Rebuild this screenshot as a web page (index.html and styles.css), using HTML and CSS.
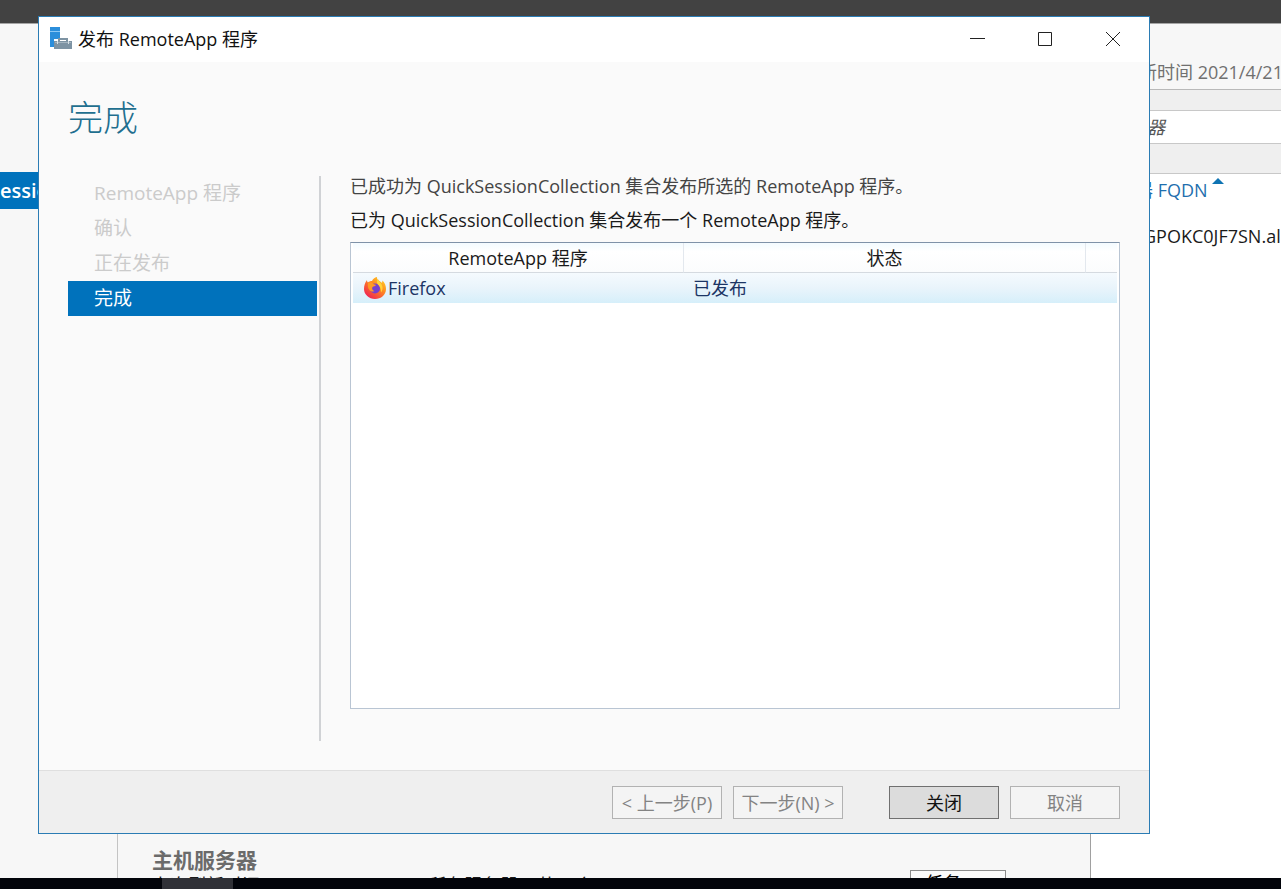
FILE: index.html
```html
<!DOCTYPE html>
<html lang="zh-CN">
<head>
  <meta charset="UTF-8" />
  <meta name="viewport" content="width=device-width, initial-scale=1.0" />
  <title>发布 RemoteApp 程序</title>
  <link rel="stylesheet" href="styles.css">
</head>
<body>
  <div class="topbar"></div>
  <div class="workspace">
    <div class="side">
      <a class="side-link" href="#">essionCollection</a>
    </div>
    <div class="hosts">
      <div class="hosts-text">
        <h2>主机服务器</h2>
        <div class="hosts-info"><span>上次刷新时间</span><span>所有服务器 | 共 1 个</span></div>
      </div>
      <button class="task-btn">任务</button>
    </div>
    <div class="servers">
      <div class="refresh-time">新时间 2021/4/21</div>
      <div class="filter-bar"><div class="filter-box">筛选器</div></div>
      <div class="server-head">服务器 FQDN <span class="sort"></span></div>
      <div class="server-name">WIN-GPOKC0JF7SN.alibaba</div>
    </div>
  </div>
  <div class="taskbar"><div class="taskbar-item"></div></div>

  <div class="dialog" role="dialog" aria-labelledby="dialog-title">
    <div class="titlebar">
      <svg class="app-icon" width="24" height="24" viewBox="0 0 24 24">
        <path fill="#2b8edb" d="M1 0h10v12H5v8H1z"/>
        <path stroke="#8cc8f5" d="M1 4.500h10"/>
        <path fill="none" stroke="#7d93a3" stroke-width="2" d="M10 14v-2h8v2"/>
        <path fill="#7d93a3" d="M5 14h18v8H5z"/>
        <path stroke="#a3b4c0" d="M6 15.500h16"/>
        <path fill="#d5dfe5" d="M8 14h1v3H8zM19 14h1v3h-1z"/>
      </svg>
      <span id="dialog-title">发布 RemoteApp 程序</span>
      <div class="window-btns">
        <button aria-label="最小化"><svg width="16" height="16" viewBox="0 0 16 16"><path d="M1 7.500h15"/></svg></button>
        <button aria-label="最大化"><svg width="16" height="16" viewBox="0 0 16 16"><path d="M1.500 1.500h13v13h-13z"/></svg></button>
        <button aria-label="关闭窗口"><svg width="16" height="16" viewBox="0 0 16 16"><path d="M1 1l14 14M15 1L1 15"/></svg></button>
      </div>
    </div>

    <h1>完成</h1>

    <div class="main">
      <ul class="steps">
        <li>RemoteApp 程序</li>
        <li>确认</li>
        <li>正在发布</li>
        <li class="active">完成</li>
      </ul>
      <div class="content">
        <p class="summary">已成功为 QuickSessionCollection 集合发布所选的 RemoteApp 程序。</p>
        <p>已为 QuickSessionCollection 集合发布一个 RemoteApp 程序。</p>
        <div class="list">
          <table>
            <colgroup><col class="col-app"><col class="col-state"><col class="col-rest"></colgroup>
            <thead>
              <tr><th>RemoteApp 程序</th><th>状态</th><th></th></tr>
            </thead>
            <tbody>
              <tr>
                <td>
                  <div class="app">
                    <svg width="22" height="22" viewBox="0 0 22 22">
                      <defs>
                        <linearGradient id="fox" x1="1" y1="0" x2="0.200" y2="1">
                          <stop offset="0" stop-color="#ffe226"/>
                          <stop offset="0.450" stop-color="#ff8a1f"/>
                          <stop offset="1" stop-color="#ef1d55"/>
                        </linearGradient>
                      </defs>
                      <path fill="url(#fox)" d="M3 3c0 1 .3 2 1 2.500C5 4.500 6.500 4 8 4c1-2 2.500-3.500 5-4-.3 2 1 3 2.500 4C17 5 17.500 5.500 18 6l.5-2.500C21 6 22 9 22 12c0 6-5 10-11 10S0 17.500 0 12c0-3.500 1-6.500 3-9z"/>
                      <circle cx="11" cy="11.500" r="5" fill="#7540cf"/>
                      <path fill="#ff9b24" d="M4 6c2-1.500 4-1 5.500 1 1 .8 2 .5 2.500 1-.5 1.500-2.500 1.200-3.500 2-1 1.500 0 3.500 2 4-2 1-4 .5-5-1C4 11.500 3.500 9 4 6z"/>
                      <path fill="#ffd43a" d="M14 2c1 3 4 4 4.500 8 .3 2-.3 4-1.500 5.500 0-4-1-6-3-8C12.500 6 12.500 4 14 2z"/>
                    </svg>
                    <span>Firefox</span>
                  </div>
                </td>
                <td>已发布</td>
                <td></td>
              </tr>
            </tbody>
          </table>
        </div>
      </div>
    </div>

    <div class="footer">
      <button disabled>&lt; 上一步(P)</button>
      <button disabled>下一步(N) &gt;</button>
      <button class="close-btn">关闭</button>
      <button disabled>取消</button>
    </div>
  </div>
</body>
</html>
```

FILE: styles.css
```css
* {
  box-sizing: border-box;
}
body {
  margin: 0;
  height: 100vh;
  display: flex;
  flex-direction: column;
  overflow: hidden;
  font-family: "Open Sans", "Noto Sans CJK SC", sans-serif;
  font-size: 18px;
  line-height: 24px;
  color: #1a1a1a;
  background: #f7f7f7;
}
h1, h2, p, ul {
  margin: 0;
  padding: 0;
}
button {
  font: inherit;
}

/* server manager behind the dialog */
.topbar {
  flex: none;
  height: 24px;
  background: #424242;
  border-bottom: 1px solid #a5a5a5;
}
.workspace {
  flex: 1;
  min-height: 0;
  display: grid;
  grid-template-columns: 117px 1fr 190px;
  grid-template-rows: 100%;
}
.side {
  padding-top: 148px;
  overflow: hidden;
}
.side-link {
  display: block;
  padding: 6px 0;
  font-size: 20px;
  font-weight: 600;
  line-height: 25px;
  color: #fff;
  background: #0072bc;
  text-decoration: none;
  overflow: hidden;
}
.hosts {
  display: flex;
  align-items: flex-end;
  justify-content: space-between;
  padding: 0 84px 0 34px;
  border-left: 1px solid #c4c4c4;
  border-right: 1px solid #a0a0a0;
  overflow: hidden;
}
.hosts-text {
  height: 31px;
}
.hosts h2 {
  font-size: 21px;
  line-height: 26px;
  color: #6b6b6b;
}
.hosts-info {
  display: flex;
  gap: 168px;
  line-height: 24px;
}
.task-btn {
  width: 96px;
  height: 8px;
  padding: 3px 14px;
  line-height: 18px;
  text-align: left;
  background: #fafafa;
  border: 1px solid #8c8c8c;
  border-bottom: 0;
  overflow: hidden;
}
.servers {
  background: #fff;
  overflow: hidden;
  white-space: nowrap;
}
.refresh-time {
  padding: 36px 0 5px 48px;
  color: #707070;
  background: #f7f7f7;
  border-bottom: 1px solid #b9b9b9;
}
.filter-bar {
  padding: 20px 0 29px;
  background: #efefef;
  border-bottom: 1px solid #c8c8c8;
}
.filter-box {
  padding: 4px 20px;
  font-style: italic;
  color: #555;
  background: #fff;
  border-top: 1px solid #c8c8c8;
  border-bottom: 1px solid #c8c8c8;
}
.server-head {
  display: flex;
  gap: 4px;
  padding: 4px 8px;
  color: #1f6fae;
}
.sort {
  height: 6px;
  border: 6px solid transparent;
  border-top: 0;
  border-bottom: 6px solid #0f74b3;
}
.server-name {
  padding: 18px 11px;
}
.taskbar {
  flex: none;
  height: 11px;
  padding-left: 162px;
  background: #02040a;
}
.taskbar-item {
  width: 71px;
  height: 11px;
  background: #303137;
}

/* wizard window */
.dialog {
  position: absolute;
  top: 16px;
  right: 131px;
  bottom: 55px;
  left: 38px;
  display: flex;
  flex-direction: column;
  background: #fafafa;
  border: 1px solid #2b7cb4;
}
.titlebar {
  flex: none;
  height: 45px;
  display: flex;
  align-items: center;
  gap: 5px;
  padding: 0 2px 2px 10px;
  color: #111;
  background: #fff;
}
.window-btns {
  display: flex;
  margin-left: auto;
}
.window-btns button {
  width: 68px;
  height: 42px;
  display: flex;
  align-items: center;
  justify-content: center;
  padding: 0;
  background: none;
  border: 0;
}
.window-btns path {
  fill: none;
  stroke: #222;
}
h1 {
  padding: 31px 29px 31px;
  font-size: 35px;
  font-weight: 300;
  line-height: 50px;
  color: #1f6f8f;
}
.main {
  flex: 1;
  min-height: 0;
  display: flex;
  gap: 29px;
  padding: 0 29px 29px;
}
.steps {
  flex: none;
  width: 253px;
  margin-top: 2px;
  padding-right: 2px;
  list-style: none;
  font-size: 19px;
  line-height: 35px;
  color: #cbcbcb;
  border-right: 2px solid #d0d2d5;
}
.steps li {
  padding-left: 26px;
}
.steps .active {
  color: #fff;
  background: #0072bc;
}
.content {
  flex: 1;
  display: flex;
  flex-direction: column;
  padding-bottom: 32px;
}
.content p {
  margin-bottom: 10px;
}
.content .summary {
  color: #444;
}
.list {
  flex: 1;
  padding: 0 2px;
  background: #fff;
  border: 1px solid #b9c5d3;
  border-top-color: #7f92a8;
}
table {
  width: 100%;
  table-layout: fixed;
  border-collapse: separate;
  border-spacing: 0;
}
.col-app {
  width: 331px;
}
.col-rest {
  width: 31px;
}
th, td {
  height: 30px;
  padding: 0 9px;
}
th {
  font-weight: 400;
  border-right: 1px solid #e3e8ee;
  border-bottom: 1px solid #d5dae0;
  background: linear-gradient(#f3fbff, #fff 30%, #fbfcfd);
}
th:last-child {
  border-right: 0;
}
td {
  color: #1c3565;
  background: linear-gradient(#f5fafe, #e9f4fb 50%, #d6effa);
}
.app {
  display: flex;
  align-items: center;
  gap: 2px;
  padding-left: 2px;
}
.footer {
  flex: none;
  display: flex;
  justify-content: flex-end;
  gap: 11px;
  padding: 15px 29px 14px;
  background: #efefef;
  border-top: 1px solid #dfdfdf;
}
.footer button {
  width: 110px;
  height: 33px;
  padding: 0;
  white-space: nowrap;
  color: #838383;
  background: #f4f4f4;
  border: 1px solid #b2b2b2;
}
.footer .close-btn {
  margin-left: 35px;
  color: #111;
  background: #dcdcdc;
  border-color: #707070;
}
```
